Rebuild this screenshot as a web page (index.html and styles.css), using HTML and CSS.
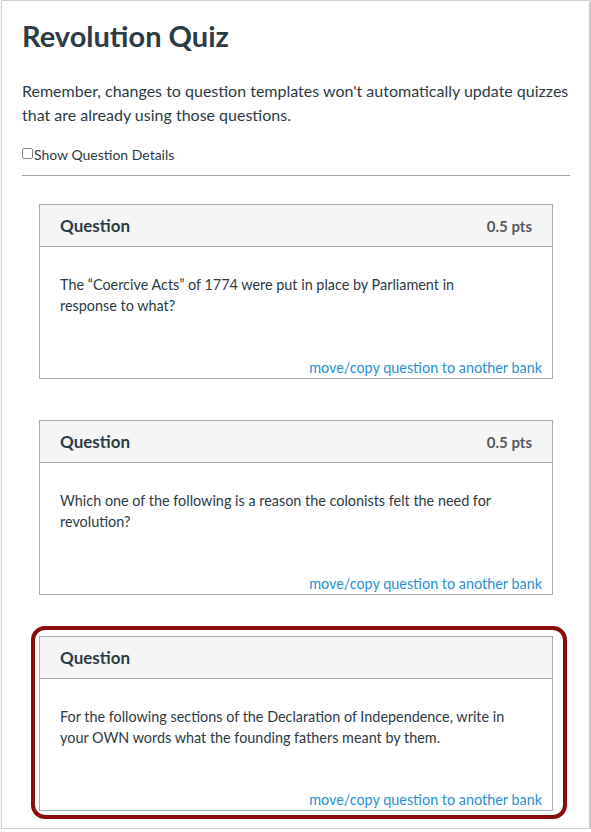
FILE: index.html
```html
<!DOCTYPE html>
<html lang="en">
<head>
<meta charset="utf-8">
<title>Revolution Quiz</title>
<link rel="stylesheet" href="styles.css">
</head>
<body>
<div class="window">
  <h1 class="title">Revolution Quiz</h1>
  <p class="note">Remember, changes to question templates won't automatically update quizzes that are already using those questions.</p>
  <label class="details"><input type="checkbox" class="check">Show Question Details</label>
  <hr class="rule">
  <div class="questions">
    <div class="card">
      <div class="card-head"><span class="q-name">Question</span><span class="q-pts">0.5 pts</span></div>
      <div class="card-body">
        <p class="q-text">The “Coercive Acts” of 1774 were put in place by Parliament in response to what?</p>
        <div class="q-links"><a class="q-link" href="#">move/copy question to another bank</a></div>
      </div>
    </div>
    <div class="card">
      <div class="card-head"><span class="q-name">Question</span><span class="q-pts">0.5 pts</span></div>
      <div class="card-body">
        <p class="q-text">Which one of the following is a reason the colonists felt the need for revolution?</p>
        <div class="q-links"><a class="q-link" href="#">move/copy question to another bank</a></div>
      </div>
    </div>
    <div class="card card-highlight">
      <div class="card-head"><span class="q-name">Question</span></div>
      <div class="card-body">
        <p class="q-text">For the following sections of the Declaration of Independence, write in your OWN words what the founding fathers meant by them.</p>
        <div class="q-links"><a class="q-link" href="#">move/copy question to another bank</a></div>
      </div>
    </div>
  </div>
</div>
</body>
</html>
```

FILE: styles.css
```css
html, body {
  margin: 0;
  padding: 0;
  background: #ffffff;
}

body {
  font-family: Lato, "Open Sans", "Liberation Sans", sans-serif;
  color: #2d3b45;
}

.window {
  box-sizing: border-box;
  width: 589px;
  height: 829px;
  margin-left: 1px;
  border: 1px solid #cfcfcf;
  box-shadow: 1px 1px 2px rgba(0, 0, 0, 0.35);
  padding: 18px 19px 0 20px;
  overflow: hidden;
  background: #fff;
}

.title {
  margin: 0;
  font-size: 29px;
  font-weight: 700;
  line-height: 34px;
  color: #2d3b45;
}

.note {
  margin: 26px 0 0;
  font-size: 16px;
  line-height: 24px;
}

.details {
  display: flex;
  align-items: center;
  margin-top: 18px;
  font-size: 14px;
  line-height: 20px;
}

.check {
  appearance: none;
  -webkit-appearance: none;
  width: 11px;
  height: 11px;
  margin: 0 1px 0 0;
  border: 1px solid #8a8a8a;
  border-radius: 2px;
  background: #fff;
  position: relative;
  top: -2px;
}

.rule {
  margin: 10px 0 0;
  border: 0;
  border-top: 1px solid #a8a8a8;
  height: 0;
}

.questions {
  margin: 28px 17px 0;
  display: flex;
  flex-direction: column;
  gap: 41px;
}

.card {
  border: 1px solid #ababab;
  background: #fff;
}

.card-head {
  display: flex;
  justify-content: space-between;
  align-items: center;
  height: 41px;
  padding: 0 20px;
  background: #f5f5f5;
  border-bottom: 1px solid #ababab;
}

.q-name {
  font-size: 17px;
  font-weight: 700;
  color: #2d3b45;
}

.q-pts {
  font-size: 15px;
  font-weight: 700;
  color: #555a5e;
}

.card-body {
  padding: 27px 10px 0 20px;
}

.q-text {
  margin: 0 30px 41px 0;
  font-size: 14.4px;
  line-height: 21px;
}

.q-links {
  text-align: right;
  font-size: 14.4px;
  line-height: 21px;
}

.q-link {
  color: #2b8fd6;
  text-decoration: none;
}

.card-highlight {
  position: relative;
}

.card-highlight::before {
  content: "";
  position: absolute;
  left: -9px;
  right: -15px;
  top: -11px;
  bottom: -9px;
  border: 4px solid #8c0b0b;
  border-radius: 14px;
  pointer-events: none;
}
```
